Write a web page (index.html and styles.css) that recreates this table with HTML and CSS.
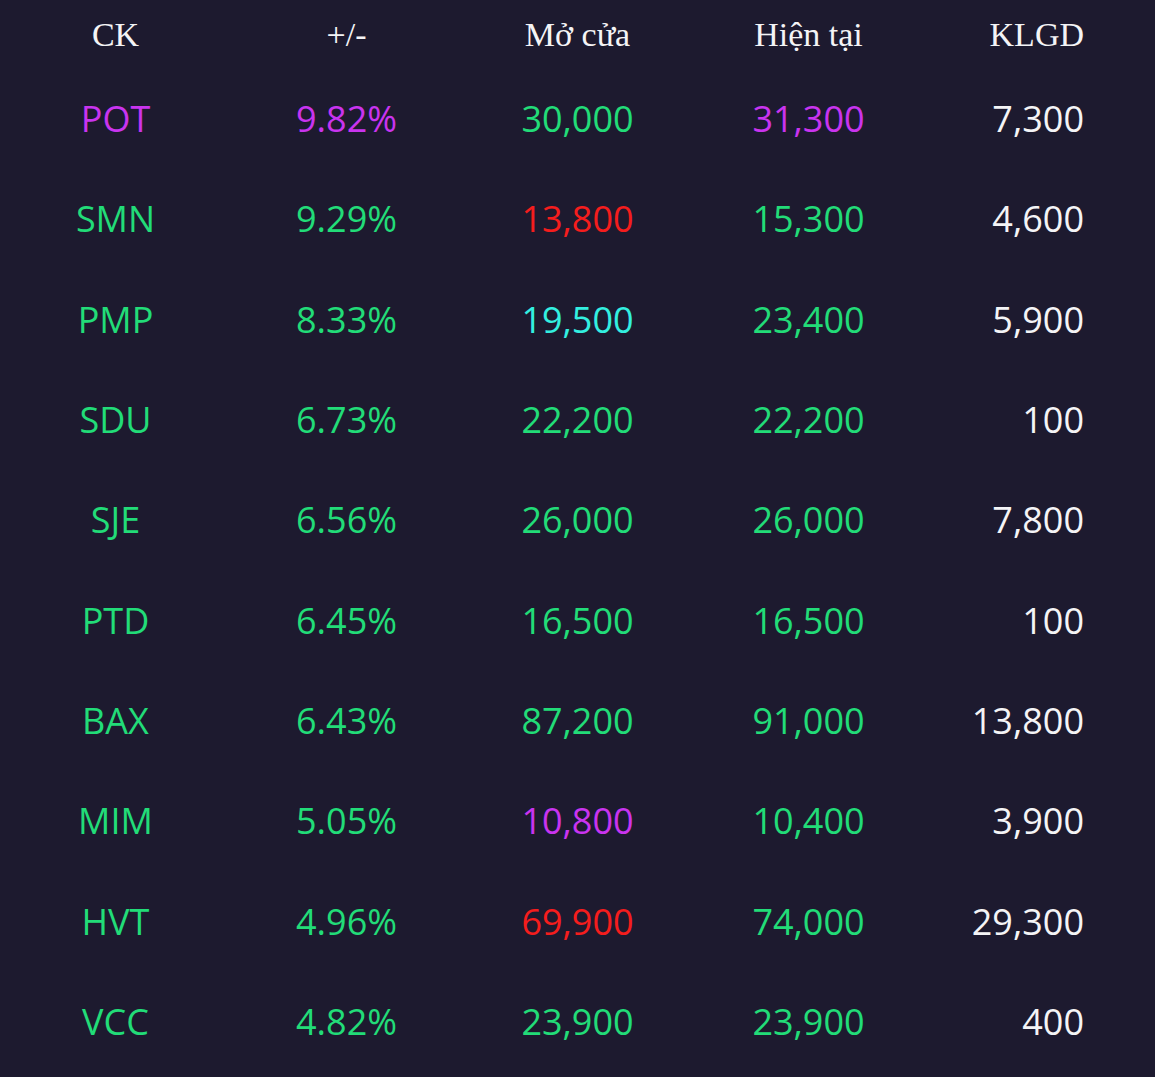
FILE: index.html
```html
<!DOCTYPE html>
<html lang="vi">
<head>
<meta charset="utf-8">
<title>Bảng giá</title>
<link rel="stylesheet" href="styles.css">
</head>
<body>
<div class="board">
  <div class="row head">
    <div class="cell">CK</div>
    <div class="cell">+/-</div>
    <div class="cell">Mở cửa</div>
    <div class="cell">Hiện tại</div>
    <div class="cell vol">KLGD</div>
  </div>
  <div class="row">
    <div class="cell ceil">POT</div><div class="cell ceil">9.82%</div><div class="cell up">30,000</div><div class="cell ceil">31,300</div><div class="cell vol">7,300</div>
  </div>
  <div class="row">
    <div class="cell up">SMN</div><div class="cell up">9.29%</div><div class="cell down">13,800</div><div class="cell up">15,300</div><div class="cell vol">4,600</div>
  </div>
  <div class="row">
    <div class="cell up">PMP</div><div class="cell up">8.33%</div><div class="cell floor">19,500</div><div class="cell up">23,400</div><div class="cell vol">5,900</div>
  </div>
  <div class="row">
    <div class="cell up">SDU</div><div class="cell up">6.73%</div><div class="cell up">22,200</div><div class="cell up">22,200</div><div class="cell vol">100</div>
  </div>
  <div class="row">
    <div class="cell up">SJE</div><div class="cell up">6.56%</div><div class="cell up">26,000</div><div class="cell up">26,000</div><div class="cell vol">7,800</div>
  </div>
  <div class="row">
    <div class="cell up">PTD</div><div class="cell up">6.45%</div><div class="cell up">16,500</div><div class="cell up">16,500</div><div class="cell vol">100</div>
  </div>
  <div class="row">
    <div class="cell up">BAX</div><div class="cell up">6.43%</div><div class="cell up">87,200</div><div class="cell up">91,000</div><div class="cell vol">13,800</div>
  </div>
  <div class="row">
    <div class="cell up">MIM</div><div class="cell up">5.05%</div><div class="cell ceil">10,800</div><div class="cell up">10,400</div><div class="cell vol">3,900</div>
  </div>
  <div class="row">
    <div class="cell up">HVT</div><div class="cell up">4.96%</div><div class="cell down">69,900</div><div class="cell up">74,000</div><div class="cell vol">29,300</div>
  </div>
  <div class="row">
    <div class="cell up">VCC</div><div class="cell up">4.82%</div><div class="cell up">23,900</div><div class="cell up">23,900</div><div class="cell vol">400</div>
  </div>
</div>
</body>
</html>
```
FILE: styles.css
```css
html, body {
  margin: 0;
  padding: 0;
  background: #1d1a2f;
}
body {
  height: 1077px;
  overflow: hidden;
}
.board {
  display: flex;
  flex-direction: column;
}
.row {
  display: grid;
  grid-template-columns: repeat(5, 1fr);
  height: 100.33px;
  align-items: center;
  font-family: "Open Sans", "Noto Sans", sans-serif;
  font-size: 36px;
  font-weight: 500;
  line-height: 1;
  color: #f4f4f6;
}
.row.head {
  height: 69px;
  font-family: "Liberation Serif", "Times New Roman", serif;
  font-size: 34px;
  font-weight: 400;
  color: #f4f4f6;
}
.cell {
  text-align: center;
  white-space: nowrap;
}
.cell.vol {
  text-align: right;
  padding-right: 71px;
}
.up { color: #22dc78; }
.ceil { color: #c934ef; }
.down { color: #f51d1d; }
.floor { color: #33efe0; }
```
